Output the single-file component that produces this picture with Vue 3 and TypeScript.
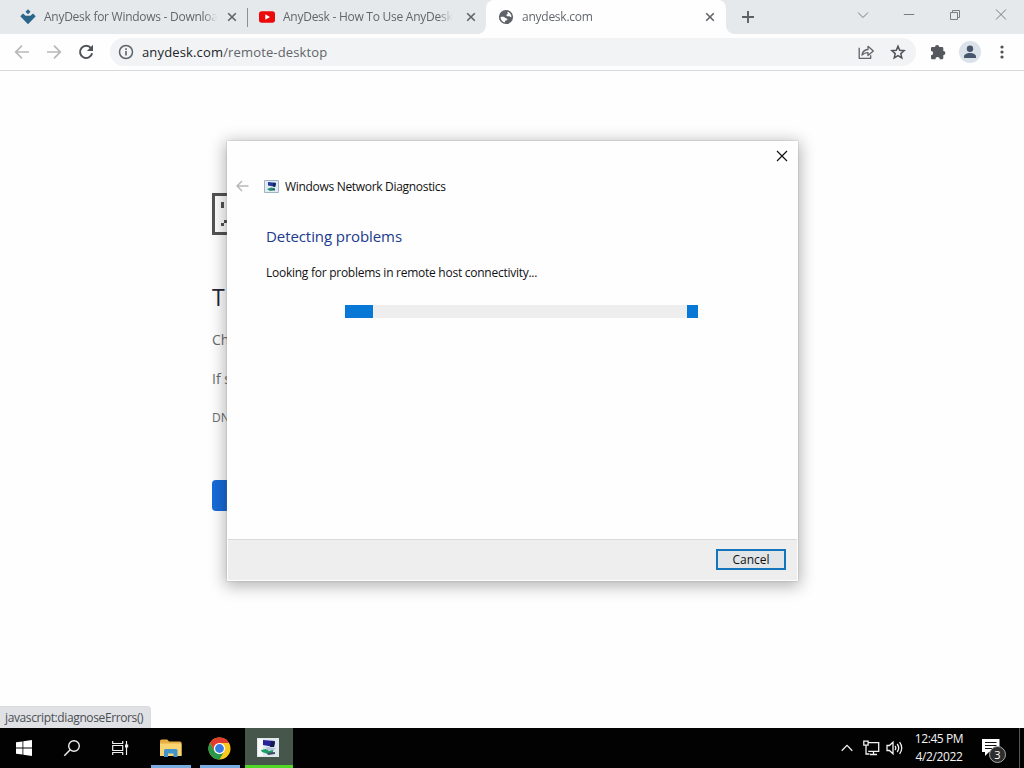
<script setup lang="ts">
interface Tab { title: string; icon: 'anydesk' | 'youtube' | 'globe'; active?: boolean }
const tabs: Tab[] = [
  { title: 'AnyDesk for Windows - Downloa', icon: 'anydesk' },
  { title: 'AnyDesk - How To Use AnyDesk', icon: 'youtube' },
  { title: 'anydesk.com', icon: 'globe', active: true },
]
const details = ['Checking the connection', 'If spelling is correct, try', 'DNS_PROBE']
</script>

<template>
  <div class="desktop">
    <header class="tabstrip">
      <div v-for="t in tabs" :key="t.icon" class="tab" :class="[t.icon, { active: t.active }]">
        <svg v-if="t.icon === 'anydesk'" class="fav" width="16" height="16" viewBox="0 0 16 16">
          <path d="M8 .2l2.500 2.500L8 5.200 5.500 2.700z" fill="#29668a" />
          <path d="M.3 7.300L3 4.600l2.600 2.100h4.800L13 4.600l2.700 2.700L8 15.300z" fill="#29668a" />
        </svg>
        <svg v-else-if="t.icon === 'youtube'" class="fav" width="16" height="16" viewBox="0 0 16 16">
          <rect y="2.300" width="16" height="11.400" rx="2.700" fill="#ed0909" /><path d="M6.300 5.300v5.400L11 8z" fill="#fff" />
        </svg>
        <svg v-else class="fav" width="16" height="16" viewBox="0 0 16 16">
          <circle cx="8" cy="8" r="7.100" fill="#5f6368" />
          <path d="M2.600 8c1.800-.2 3.500-.5 4.500.8s2 .3 2.300 1.400-1.800.6-2.200 1.900-.3 1-.5 1.400C4 12.700 2.300 10.500 2.600 8zM9.400 2.700c2.800.8 4.200 2.900 4 5.300-1.300.3-1.500-1-2.900-.7-1.300.2-2.200-.3-2-1.500.2-.9 1.600-.4 1.200-1.500-.2-.7-.4-.8-.3-1.600z" fill="#fff" />
        </svg>
        <span class="title">{{ t.title }}</span>
        <svg class="tabx" width="10" height="10" viewBox="0 0 10 10"><path d="M1.200 1.200l7.600 7.600M8.800 1.200L1.200 8.800" stroke="#5f6368" stroke-width="1.600" /></svg>
      </div>
      <svg class="plus" width="14" height="14" viewBox="0 0 14 14"><path d="M7 1v12M1 7h12" stroke="#5c6065" stroke-width="1.900" /></svg>
      <div class="winbuttons">
        <svg width="12" height="12" viewBox="0 0 12 12"><path d="M1 3.500l5 5 5-5" /></svg>
        <svg width="12" height="12" viewBox="0 0 12 12"><path d="M.8 5.500h10.400" /></svg>
        <svg width="12" height="12" viewBox="0 0 12 12"><path d="M1.500 3.500h7v7h-7zM3.500 3.500v-2h7v7h-2" /></svg>
        <svg width="12" height="12" viewBox="0 0 12 12"><path d="M1 .5l10 10M11 .5L1 10.500" /></svg>
      </div>
    </header>

    <nav class="toolbar">
      <svg class="back" width="16" height="16" viewBox="0 0 16 16"><path d="M15 8H2M8 1.700L1.700 8 8 14.300" fill="none" stroke="#b7b8ba" stroke-width="1.700" /></svg>
      <svg class="fwd" width="16" height="16" viewBox="0 0 16 16"><path d="M1 8h13M8 1.700L14.300 8 8 14.300" fill="none" stroke="#b7b8ba" stroke-width="1.700" /></svg>
      <svg class="reload" width="16" height="16" viewBox="0 0 16 16"><path d="M13 4.200A6.100 6.100 0 1 0 14.100 9.200" fill="none" stroke="#505357" stroke-width="2" /><path d="M15 .8v6.100H8.900z" fill="#505357" /></svg>
      <div class="omnibox">
        <svg width="16" height="16" viewBox="0 0 16 16"><circle cx="8" cy="8" r="6.500" fill="none" stroke="#5f6368" stroke-width="1.500" /><path d="M8 7v4.500M8 4.300v1.600" stroke="#5f6368" stroke-width="1.600" /></svg>
        <span class="url"><b>anydesk.com</b>/remote-desktop</span>
        <svg class="share" width="17" height="16" viewBox="0 0 17 16"><path d="M1.200 3.800v10.500h11.500v-3.100M4 11c.4-3.300 2.700-5.300 6-5.500V2.300L15.300 7 10 11.500V8.700C7.500 8.600 5.600 9.400 4 11z" fill="none" stroke="#606368" stroke-width="1.300" stroke-linejoin="round" /></svg>
        <svg class="star" width="16" height="16" viewBox="0 0 16 16"><path d="M8 2.200l1.700 4.100 4.400.4-3.300 2.900 1 4.300L8 11.600l-3.800 2.300 1-4.300-3.300-2.900 4.400-.4z" fill="none" stroke="#505357" stroke-width="1.500" /></svg>
      </div>
      <svg class="puzzle" width="16" height="16" viewBox="0 0 16 16"><path d="M1 4.300Q1 3 2.300 3H5A2.100 2.100 0 0 1 9.200 3H12q1.300 0 1.300 1.300V7A2.100 2.100 0 0 1 13.300 11.200V14q0 1.300-1.300 1.300H9.800A2.200 2.200 0 0 0 5.400 15.300H2.300Q1 15.300 1 14V11.300A2.100 2.100 0 0 0 1 7z" fill="#55585c" /></svg>
      <span class="avatar"><svg width="14" height="14" viewBox="0 0 14 14"><circle cx="7" cy="3.700" r="3.200" fill="#47566a" /><path d="M1 13v-1.500c0-2.200 3-3.500 6-3.500s6 1.300 6 3.500V13z" fill="#47566a" /></svg></span>
      <svg class="dots" width="4" height="16" viewBox="0 0 4 16"><g fill="#4e5155"><circle cx="2" cy="3" r="1.600" /><circle cx="2" cy="8" r="1.600" /><circle cx="2" cy="13" r="1.600" /></g></svg>
    </nav>

    <main class="page">
      <div class="errorpage">
        <svg class="sad" width="42" height="42" viewBox="0 0 42 42"><path d="M1.500 1.500h39v39h-39z" fill="none" stroke="#535353" stroke-width="3" /><path d="M9 9h3v6H9zM9 30h3v3H9zM12 27h9v3h-9z" fill="#535353" /></svg>
        <h1>This site can't be reached</h1>
        <p v-for="d in details" :key="d">{{ d }}</p>
        <div class="bluebtn"></div>
      </div>
      <div class="status">javascript:diagnoseErrors()</div>
    </main>

    <footer class="taskbar">
      <div class="task"><svg width="16" height="16" viewBox="0 0 16 16"><path d="M0 2.300l6.500-.9v6.100H0zM7.300 1.300L16 0v7.500H7.300zM0 8.400h6.500v6.200L0 13.700zM7.300 8.400H16V16l-8.700-1.300z" fill="#fff" /></svg></div>
      <div class="task"><svg width="18" height="18" viewBox="0 0 18 18"><circle cx="11" cy="7" r="5.300" fill="none" stroke="#eee" stroke-width="1.400" /><path d="M7.200 10.800L1.300 16.700" stroke="#eee" stroke-width="1.500" /></svg></div>
      <div class="task"><svg width="17" height="16" viewBox="0 0 17 16"><path d="M.7 1v2.500h10V1M.7 15v-2.500h10V15M.7 5.500h10v5H.7zM14.500 1v14" fill="none" stroke="#eee" stroke-width="1.200" /><path d="M13 4.500h3.200v3H13z" fill="#eee" /></svg></div>
      <div class="task open"><svg width="22" height="18" viewBox="0 0 22 18"><path d="M0 2q0-1.500 1.500-1.500h5.800l1.800 2H20q1.500 0 1.500 1.500v13H0z" fill="#e7ae43" /><path d="M0 4.500h21.500V17H0z" fill="#fbd472" /><path d="M4 18v-6.500q0-1.500 1.500-1.500H16q1.500 0 1.500 1.500V18h-4v-3.500H8V18z" fill="#4394cd" /></svg></div>
      <div class="task open chrome"><svg width="23" height="23" viewBox="0 0 24 24"><circle cx="12" cy="12" r="11.500" fill="#fbc91c" /><path d="M2.040 6.250A11.500 11.500 0 0 1 21.960 6.250H12A5.750 5.750 0 0 0 7 14.870z" fill="#e33b30" /><path d="M2.040 6.250A11.500 11.500 0 0 0 12 23.500l5-8.620A5.750 5.750 0 0 1 7 14.870z" fill="#27974b" /><circle cx="12" cy="12" r="5.800" fill="#fff" /><circle cx="12" cy="12" r="4.600" fill="#3779e5" /></svg></div>
      <div class="task open current">
        <svg width="22" height="19" viewBox="0 0 22 19"><path d="M0 0h22v19H0z" fill="#dfe9ed" /><path d="M1 1h5v17H1z" fill="#f5faf9" /><path d="M6 2l12 1-1 6-11-2z" fill="#28239b" /><path d="M14 3l4 1-1 5h-4z" fill="#151c4c" /><path d="M9 9l10 1-3 3-6-1z" fill="#b5c3dc" /><path d="M4 12l5-1 3 2 4-1v3l-5 1-6-2z" fill="#1d9c66" /><path d="M10 15l8-1v2l-7 1z" fill="#414b63" /></svg>
      </div>
      <div class="tray">
        <svg class="chev" width="12" height="8" viewBox="0 0 12 8"><path d="M.7 6.700L6 1.400l5.300 5.300" stroke-width="1.500" /></svg>
        <svg class="net" width="17" height="16" viewBox="0 0 17 16"><path d="M5.200 2.700h10.500v8.600H5.200M10.500 11.300v3M7 14.500h7M.8 1.200h4.300v4H.8zM3 5.200V14h3.500" /></svg>
        <svg class="vol" width="18" height="16" viewBox="0 0 18 16"><path d="M1 5.500h2.400L7 2.200v11.600l-3.600-3.300H1zM9 6q1.600 2 0 4M11.200 4q3 4 0 8M13.600 2.200q4.300 5.800 0 11.600" /></svg>
        <div class="clock"><span>12:45 PM</span><span>4/2/2022</span></div>
        <div class="notif">
          <svg width="18" height="17" viewBox="0 0 18 17"><path d="M0 0h17.500v13H7l-4 4v-4H0z" fill="#fff" /><path d="M3 3.500h11.500M3 6.500h11.500M3 9.500h7" stroke="#111" /></svg>
          <span class="count">3</span>
        </div>
        <i class="peek"></i>
      </div>
    </footer>

    <section class="dialog">
      <div class="closebar"><svg width="12" height="12" viewBox="0 0 12 12"><path d="M1 1l10 10M11 1L1 11" stroke="#111" stroke-width="1.150" /></svg></div>
      <div class="dhead">
        <svg width="13" height="12" viewBox="0 0 13 12"><path d="M12.500 6H1.500M6 1L1 6l5 5" fill="none" stroke="#b8b8b8" stroke-width="1.500" /></svg>
        <svg class="dicon" width="15" height="13" viewBox="0 0 15 13"><path d="M.5.500h14v12H.5z" fill="#e2edf3" stroke="#a4b2c8" /><path d="M4 2l8 .7-.7 4L4 5.600z" fill="#253b9b" /><path d="M9 3l3 .3-1 3.700-2-.5z" fill="#12265c" /><path d="M3 9l4-1.500 4 .7v2L6 11z" fill="#288e72" /><path d="M7 9.500l4-.7v1.700z" fill="#35546d" /></svg>
        <span class="dtitle">Windows Network Diagnostics</span>
      </div>
      <div class="dbody">
        <h2>Detecting problems</h2>
        <div class="msg">Looking for problems in remote host connectivity...</div>
        <div class="progress"><i></i><i></i></div>
      </div>
      <div class="dfoot"><button>Cancel</button></div>
    </section>
  </div>
</template>

<style>
body { margin: 0; overflow: hidden; background: #fff; }
</style>
<style scoped>
* { box-sizing: border-box; }
.desktop { position: relative; width: 1024px; height: 768px; overflow: hidden; display: flex; flex-direction: column; background: #fefefe; font-family: "Open Sans", "Noto Sans", sans-serif; font-size: 12px; color: #111; }
svg { display: block; flex: none; }
.tabstrip { height: 34px; display: flex; background: #e5e9ec; flex: none; }
.tab { display: flex; align-items: center; height: 34px; width: 239px; padding: 0 11px 0 11px; flex: none; position: relative; color: #63676c; }
.tab.anydesk { width: 248px; padding-left: 20px; border-right: 1px solid transparent; }
.tab.anydesk::after { content: ""; position: absolute; right: -1px; top: 8px; width: 1px; height: 19px; background: #8c9094; }
.tab.active { background: #fefefe; border-radius: 8px 8px 0 0; width: 240px; margin-left: -1px; padding-left: 12px; }
.tab.active::before, .tab.active::after { content: ""; position: absolute; bottom: 0; width: 8px; height: 8px; }
.tab.active::before { left: -8px; background: radial-gradient(circle at 0 0, transparent 7.5px, #fefefe 8px); }
.tab.active::after { right: -8px; background: radial-gradient(circle at 100% 0, transparent 7.5px, #fefefe 8px); }
.title { width: 175px; margin-left: 8px; overflow: hidden; white-space: nowrap; line-height: 18px; letter-spacing: -.27px; -webkit-mask-image: linear-gradient(90deg, #000 91%, transparent 99%); }
.youtube .title { width: 171px; letter-spacing: -.26px; }
.active .title { width: 180px; letter-spacing: -.25px; }
.tabx { margin-left: auto; }
.anydesk .tabx { margin-right: -1px; }
.plus { margin: 10px 0 0 15px; }
.winbuttons { margin-left: auto; display: flex; gap: 34px; padding: 9px 17px 0 0; }
.winbuttons path { fill: none; stroke: #797d82; stroke-width: 1; }
.toolbar { height: 37px; flex: none; display: flex; align-items: center; padding: 0 20px 1px 14px; border-bottom: 1px solid #d9dadb; background: #fefefe; }
.fwd, .reload { margin-left: 16px; }
.omnibox { margin-left: 16px; width: 806px; height: 28px; border-radius: 14px; background: #f1f3f4; display: flex; align-items: center; padding: 0 10px 0 8px; }
.url { margin-left: 8px; font-size: 13px; color: #61656a; letter-spacing: .15px; line-height: 20px; }
.url b { font-weight: 400; color: #222529; }
.share { margin-left: auto; }
.star { margin-left: 15px; }
.puzzle { margin-left: 14px; }
.avatar { width: 22px; height: 22px; border-radius: 50%; background: #dce2ea; margin-left: 13px; display: flex; align-items: center; justify-content: center; }
.dots { margin-left: auto; }
.page { flex: 1; position: relative; overflow: hidden; }
.errorpage { padding: 122px 0 0 212px; color: #6b6b6b; }
h1 { margin: 47px 0 0; font-size: 23px; line-height: 31px; font-weight: 500; color: #252536; letter-spacing: 2.500px; }
h1 + p { margin-top: 7px; }
p { margin: 0; font-size: 14px; line-height: 39px; }
p:nth-of-type(3) { font-size: 12px; line-height: 39px; }
.bluebtn { width: 70px; height: 31px; margin-top: 43px; background: #176bd9; border-radius: 4px; }
.status { position: absolute; left: 0; bottom: 0; width: 151px; height: 22px; padding: 2px 0 0 5px; background: #dfe1e5; border-top: 1px solid #d9dbde; border-right: 1px solid #d9dbde; border-radius: 0 4px 0 0; color: #4a4e53; line-height: 18px; white-space: nowrap; letter-spacing: -.38px; }
.taskbar { height: 40px; flex: none; display: flex; background: #020202; }
.task { width: 48px; display: flex; align-items: center; justify-content: center; }
.task.open { width: 40px; margin: 0 2px 0 7px; border-bottom: 3px solid #78abdf; }
.task.open:not(.current) svg { margin-top: 3px; }
.task.chrome svg { margin-right: 1px; }
.task.current { width: 48px; margin-left: 3px; background: #46564a; border-bottom-color: #50d728; }
.task.current svg { margin-right: 2px; margin-top: 1px; }
.tray { margin-left: auto; display: flex; align-items: center; height: 40px; }
.tray > svg path { fill: none; stroke: #f2f2f2; stroke-width: 1.300; }
.chev { margin-right: 1px; }
.net { margin-left: 9px; }
.vol { margin-left: 6px; }
.clock { width: 58px; margin-left: 6px; display: flex; flex-direction: column; align-items: center; color: #f4f4f4; line-height: 18px; margin-top: -1px; white-space: nowrap; letter-spacing: -.4px; }
.notif { position: relative; width: 23px; height: 23px; margin-left: 14px; margin-top: 2px; padding-top: 1px; }
.count { position: absolute; left: 7px; top: 8px; width: 17px; height: 17px; border: 1px solid #a9a9a9; border-radius: 50%; background: #2d2d2d; color: #fff; font-size: 11px; line-height: 15px; text-align: center; }
.peek { width: 1px; height: 40px; background: #595959; margin: 0 4px 0 14px; }
.dialog { position: absolute; left: 227px; top: 141px; width: 571px; height: 440px; background: #fefefe; display: flex; flex-direction: column; box-shadow: 0 0 1px #888, 0 3px 15px 2px rgba(0,0,0,.3); }
.closebar { height: 30px; display: flex; justify-content: flex-end; align-items: center; padding-right: 10px; }
.dhead { height: 30px; display: flex; align-items: center; padding-left: 9px; }
.dicon { margin-left: 15px; }
.dtitle { margin: 1px 0 0 6px; letter-spacing: -.31px; }
.dbody { flex: 1; padding: 23px 0 0 39px; }
h2 { margin: 0; font-size: 15px; line-height: 25px; font-weight: 400; color: #203a8d; letter-spacing: -.08px; }
.msg { margin-top: 15px; line-height: 18px; letter-spacing: -.26px; }
.progress { width: 353px; height: 13px; margin: 23px 0 0 79px; background: #eee; display: flex; justify-content: space-between; }
.progress i { width: 28px; background: #0778d5; }
.progress i:last-child { width: 11px; }
.dfoot { height: 41px; margin: 0 1px 1px; border-top: 1px solid #dadada; background: #eee; display: flex; justify-content: flex-end; padding: 9px 11px 0; }
button { width: 70px; height: 21px; border: 2px solid #1475bd; background: #e2e5e8; font: inherit; color: #111; padding: 0; line-height: 17px; }
</style>
